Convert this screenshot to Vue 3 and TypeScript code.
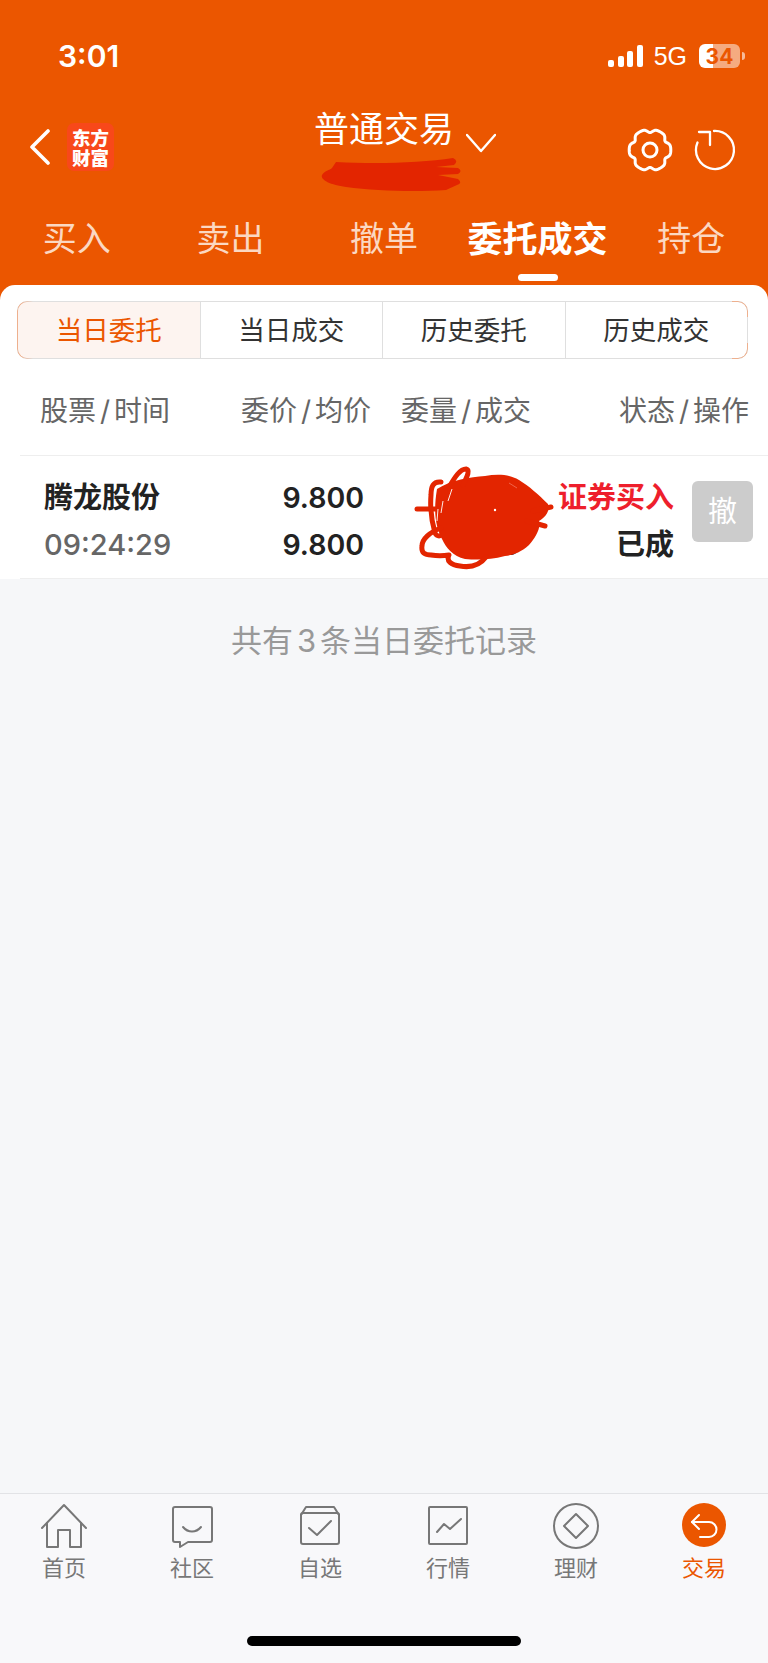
<template>
  <div class="page">
    <header class="head">
      <div class="status">
        <span class="clock">3:01</span>
        <div class="status-right">
          <div class="signal">
            <i v-for="h in signalBars" :key="h" :style="{ height: h + 'px' }"></i>
          </div>
          <span class="net">5G</span>
          <div class="battery"><span>34</span></div>
          <i class="battery-nub"></i>
        </div>
      </div>

      <div class="nav">
        <div class="nav-left">
          <svg class="back" width="22" height="36" viewBox="0 0 22 36">
            <path d="M19 2 3 18l16 16" fill="none" stroke="#fff" stroke-width="3.6" stroke-linecap="round" stroke-linejoin="round" />
          </svg>
          <div class="logo">
            <span>东方</span>
            <span>财富</span>
          </div>
        </div>
        <div class="title">
          <span class="title-text">普通交易</span>
          <svg class="caret" width="30" height="20" viewBox="0 0 30 20">
            <path d="M1 2 15 18 29 2" fill="none" stroke="#fff" stroke-width="2.4" stroke-linecap="round" stroke-linejoin="round" />
          </svg>
          <svg class="smear" width="150" height="40" viewBox="0 0 150 40">
            <path d="M20 8C60 10 105 9 137 4Q143 7 138 11L120 13 142 14Q147 17 142 20L122 21 142 25Q147 29 141 31L130 36C100 38 60 37 30 33 15 31 4 26 6 21 8 17 14 16 16 14 14 8 20 8Z" fill="#e32500" />
          </svg>
        </div>
        <div class="nav-right">
          <svg width="48" height="48" viewBox="0 0 48 48" fill="none" stroke="#fff" stroke-width="3">
            <path :d="gearPath" stroke-linejoin="round" />
            <circle cx="24" cy="24" r="7" />
          </svg>
          <svg width="48" height="48" viewBox="0 0 48 48" fill="none" stroke="#fff" stroke-width="2.3" stroke-linecap="round">
            <path d="M23 5A19 19 0 1 1 6.5 16.5" />
            <path d="M8 6H19V19" stroke-linejoin="round" />
          </svg>
        </div>
      </div>

      <nav class="tabs">
        <div v-for="t in topTabs" :key="t" class="tab" :class="{ on: t === '委托成交' }">
          <span>{{ t }}</span>
          <i v-if="t === '委托成交'" class="tab-bar"></i>
        </div>
      </nav>
    </header>

    <main class="card">
      <div class="seg">
        <div v-for="(s, i) in segments" :key="s" class="seg-item" :class="{ on: i === 0 }">{{ s }}</div>
      </div>

      <div class="thead">
        <span v-for="(h, i) in headCols" :key="h[0]" :class="{ first: i === 0 }">{{ h[0] }}<em>/</em>{{ h[1] }}</span>
      </div>

      <div class="row">
        <div class="cell-name">
          <b>腾龙股份</b>
          <span>09:24:29</span>
        </div>
        <div class="cell-num">
          <b>9.800</b>
          <b>9.800</b>
        </div>
        <div class="cell-num">
          <b>&nbsp;</b>
          <b>0</b>
        </div>
        <div class="cell-state">
          <b class="buy">证券买入</b>
          <b>已成</b>
        </div>
        <div class="cancel">撤</div>

        <svg class="scribble" width="150" height="110" viewBox="0 0 150 110">
          <path d="M32 28C46 19 65 16 80 15 92 13 104 13 114 19 124 25 134 34 143 43 145 50 141 56 134 60 136 68 130 77 124 84 115 92 108 94 100 95 85 99 72 99 60 98 48 95 41 87 37 78 31 66 28 52 32 28Z" fill="#e32500" />
          <g fill="none" stroke="#e32500" stroke-width="5" stroke-linecap="round" stroke-linejoin="round">
            <path d="M12 48H38" />
            <path d="M36 67C25 71 17 78 17 85 16 92 20 94 26 94 32 95 38 95 44 94 41 100 46 104 55 105 66 107 75 104 81 96" />
            <path d="M44 26C50 16 55 8 61 8 65 9 63 14 58 24" />
            <path d="M36 21C28 20 26 26 26 34 25 46 26 58 30 72 32 76 36 76 38 72" />
            <path d="M140 65 122 60" />
            <path d="M128 50 146 46" />
          </g>
          <path d="M47 28 43 40M33 48 32 60M38 40 36 52" fill="none" stroke="#fff" stroke-width="0.9" />
          <path d="M104 22 112 27" fill="none" stroke="#f4735c" stroke-width="0.8" />
          <circle cx="90" cy="49" r="1.2" fill="#fff" />
        </svg>
      </div>
    </main>

    <p class="total">共有<span>3</span>条当日委托记录</p>

    <footer class="tabbar">
      <div v-for="item in bottomTabs" :key="item.label" class="bar-item" :class="{ on: item.active }">
        <svg width="48" height="48" viewBox="0 0 48 48" fill="none" stroke-width="2" stroke-linecap="round" stroke-linejoin="round">
          <circle v-if="item.active" cx="24" cy="23" r="22" fill="#eb5600" />
          <path v-for="d in item.paths" :key="d" :d="d" :stroke="item.active ? '#fff' : '#777'" />
        </svg>
        <span>{{ item.label }}</span>
      </div>
      <i class="home-line"></i>
    </footer>
  </div>
</template>

<script setup lang="ts">
const signalBars = [7, 11, 16, 22];
const topTabs = ["买入", "卖出", "撤单", "委托成交", "持仓"];
const segments = ["当日委托", "当日成交", "历史委托", "历史成交"];
const headCols = [
  ["股票", "时间"],
  ["委价", "均价"],
  ["委量", "成交"],
  ["状态", "操作"],
];

// six flat lobes with narrow dents between them
const gearPath = (() => {
  const pts: string[] = [];
  for (let i = 0; i < 144; i++) {
    const a = (i / 144) * Math.PI * 2;
    const dent = Math.pow((1 - Math.cos(6 * a)) / 2, 3);
    const r = 20.8 - 3.4 * dent;
    pts.push(`${(24 + r * Math.cos(a)).toFixed(2)} ${(24 + r * Math.sin(a)).toFixed(2)}`);
  }
  return `M${pts.join("L")}Z`;
})();

const bottomTabs = [
  {
    label: "首页",
    paths: ["M2 26 24 3 46 26", "M7 21V45H18V28H30V45H41V21"],
  },
  {
    label: "社区",
    paths: [
      "M7 5H42a2 2 0 0 1 2 2V38a2 2 0 0 1-2 2H20L12 45V40H7a2 2 0 0 1-2-2V7a2 2 0 0 1 2-2Z",
      "M15 25C20 31 28 31 33 25",
    ],
  },
  {
    label: "自选",
    paths: [
      "M7 11H41a2 2 0 0 1 2 2V40a2 2 0 0 1-2 2H7a2 2 0 0 1-2-2V13a2 2 0 0 1 2-2Z",
      "M5 13 10 5H38L43 13",
      "M13 26 21 33 35 19",
    ],
  },
  {
    label: "行情",
    paths: ["M6 5H42a1 1 0 0 1 1 1V41a1 1 0 0 1-1 1H6a1 1 0 0 1-1-1V6a1 1 0 0 1 1-1Z", "M13 30 20 22 26 27 37 17"],
  },
  {
    label: "理财",
    paths: ["M2 24a22 22 0 1 0 44 0a22 22 0 1 0-44 0Z", "M24 12 36 24 24 36 12 24Z"],
  },
  {
    label: "交易",
    active: true,
    paths: ["M12 20H29a7.5 7.5 0 0 1 0 15H20", "M19 13 12 20 19 27"],
  },
];
</script>

<style scoped>
.page {
  display: flex;
  flex-direction: column;
  width: 768px;
  height: 1663px;
  overflow: hidden;
  background: #f6f7f9;
  font-family: Inter, "Noto Sans CJK SC", sans-serif;
}

/* header */
.head {
  height: 300px;
  background: #eb5600;
  color: #fff;
}
.status {
  display: flex;
  align-items: center;
  justify-content: space-between;
  height: 44px;
  padding: 34px 23px 22px 58px;
}
.clock {
  font-size: 30px;
  font-weight: 600;
}
.status-right {
  display: flex;
  align-items: center;
}
.signal {
  display: flex;
  align-items: flex-end;
  gap: 3.5px;
  height: 22px;
  margin-right: 11px;
}
.signal i {
  width: 6px;
  border-radius: 2px;
  background: #fff;
}
.net {
  margin-right: 12px;
  font-family: "Liberation Sans", sans-serif;
  font-size: 25px;
}
.battery {
  display: flex;
  align-items: center;
  justify-content: center;
  width: 41px;
  height: 24px;
  border-radius: 6px;
  background: linear-gradient(90deg, #fff 14px, rgba(255, 255, 255, 0.5) 14px);
  color: #eb5600;
  font-size: 21px;
  font-weight: 700;
}
.battery-nub {
  width: 3px;
  height: 8px;
  margin-left: 2px;
  border-radius: 0 3px 3px 0;
  background: rgba(255, 255, 255, 0.6);
}

.nav {
  display: grid;
  grid-template-columns: 1fr auto 1fr;
  align-items: center;
  height: 100px;
}
.nav-left {
  display: flex;
  align-items: center;
  padding: 0 0 6px 29px;
}
.logo {
  display: flex;
  flex-direction: column;
  justify-content: center;
  width: 47px;
  height: 48px;
  margin-left: 16px;
  border-radius: 7px;
  background: #f8481a;
  font-family: "Noto Sans CJK SC", sans-serif;
  font-size: 18.5px;
  font-weight: 900;
  line-height: 20px;
  text-align: center;
}
.title {
  position: relative;
  display: flex;
  align-items: flex-start;
  align-self: start;
  padding-left: 42px;
}
.title-text {
  margin-top: 4px;
  font-size: 35px;
  line-height: 50px;
}
.caret {
  margin: 33px 0 0 12px;
}
.smear {
  position: absolute;
  left: 44px;
  top: 54px;
}
.nav-right {
  display: flex;
  justify-content: flex-end;
  gap: 17px;
  padding-right: 29px;
}

.tabs {
  display: grid;
  grid-template-columns: repeat(5, 1fr);
}
.tab {
  display: flex;
  flex-direction: column;
  align-items: center;
  padding-top: 16px;
  color: #fbd8c2;
  font-size: 34px;
  line-height: 46px;
}
.tab.on {
  color: #fff;
  font-size: 35px;
  font-weight: 700;
}
.tab-bar {
  width: 40px;
  height: 7px;
  margin-top: 12px;
  border-radius: 4px;
  background: #fff;
}

/* list card */
.card {
  margin-top: -15px;
  padding-top: 16px;
  border-radius: 15px 15px 0 0;
  background: #fff;
}
.seg {
  position: relative;
  display: flex;
  height: 56px;
  margin: 0 20px 0 17px;
  border: 1px solid #dfdfdf;
  border-radius: 10px;
}
.seg::before,
.seg::after {
  content: "";
  position: absolute;
  top: -1px;
  bottom: -1px;
  width: 16px;
  border: 1px solid #eeb08e;
  box-sizing: border-box;
}
.seg::before {
  left: -1px;
  border-right: none;
  border-radius: 10px 0 0 10px;
  -webkit-mask: linear-gradient(90deg, #000 30%, transparent);
  mask: linear-gradient(90deg, #000 30%, transparent);
}
.seg::after {
  right: -1px;
  border-left: none;
  border-radius: 0 10px 10px 0;
  -webkit-mask: linear-gradient(#000 16px, transparent 16px, transparent calc(100% - 16px), #000 calc(100% - 16px));
  mask: linear-gradient(#000 16px, transparent 16px, transparent calc(100% - 16px), #000 calc(100% - 16px));
}
.seg-item {
  display: flex;
  flex: 1;
  align-items: center;
  justify-content: center;
  padding-bottom: 3px;
  color: #333;
  font-size: 26.5px;
}
.seg-item + .seg-item {
  border-left: 1px solid #dfdfdf;
}
.seg-item.on {
  border-radius: 9px 0 0 9px;
  background: #fdf4f0;
  color: #eb5600;
}

.thead {
  display: grid;
  grid-template-columns: 210px 141px 160px 218px;
  align-items: center;
  height: 92px;
  margin-left: 20px;
  padding-top: 4px;
  border-bottom: 1px solid #eee;
  color: #666;
  font-size: 28px;
  text-align: right;
}
.thead .first {
  padding-left: 20px;
  text-align: left;
}
.thead em {
  margin: 0 4px;
  font-style: normal;
}

.row {
  position: relative;
  display: grid;
  grid-template-columns: 186px 134px 156px 154px 61px;
  height: 104px;
  margin-left: 20px;
  padding: 18px 0 0 24px;
  border-bottom: 1px solid #eee;
  background: #fff;
  color: #222;
  font-size: 29px;
  line-height: 47px;
}
.row b {
  display: block;
  font-weight: 600;
}
.cell-name span {
  display: block;
  color: #666;
  font-size: 29px;
  font-weight: 500;
}
.cell-num {
  font-size: 28.5px;
  text-align: right;
}
.cell-state {
  text-align: right;
}
.buy {
  color: #ee1f2c;
}
.cancel {
  display: flex;
  align-items: center;
  justify-content: center;
  width: 61px;
  height: 61px;
  margin: 7px 0 0 18px;
  border-radius: 6px;
  background: #ccc;
  color: #fff;
  font-size: 29px;
}
.scribble {
  position: absolute;
  left: 385px;
  top: 5px;
}

.total {
  margin: 44px 0 0;
  color: #999;
  font-size: 31px;
  line-height: 36px;
  text-align: center;
}
.total span {
  margin: 0 4px;
}

/* bottom bar */
.tabbar {
  position: relative;
  display: grid;
  grid-template-columns: repeat(6, 1fr);
  height: 170px;
  margin-top: auto;
  padding-top: 8px;
  box-sizing: border-box;
  border-top: 1px solid #e2e3e6;
  background: #f8f8fa;
}
.bar-item {
  display: flex;
  flex-direction: column;
  align-items: center;
  color: #777;
  font-size: 22px;
  line-height: 36px;
}
.bar-item.on {
  color: #eb5600;
}
.home-line {
  position: absolute;
  left: 247px;
  bottom: 17px;
  width: 274px;
  height: 10px;
  border-radius: 5px;
  background: #000;
}
</style>

<style>
html,
body {
  margin: 0;
  background: #f6f7f9;
}
</style>
